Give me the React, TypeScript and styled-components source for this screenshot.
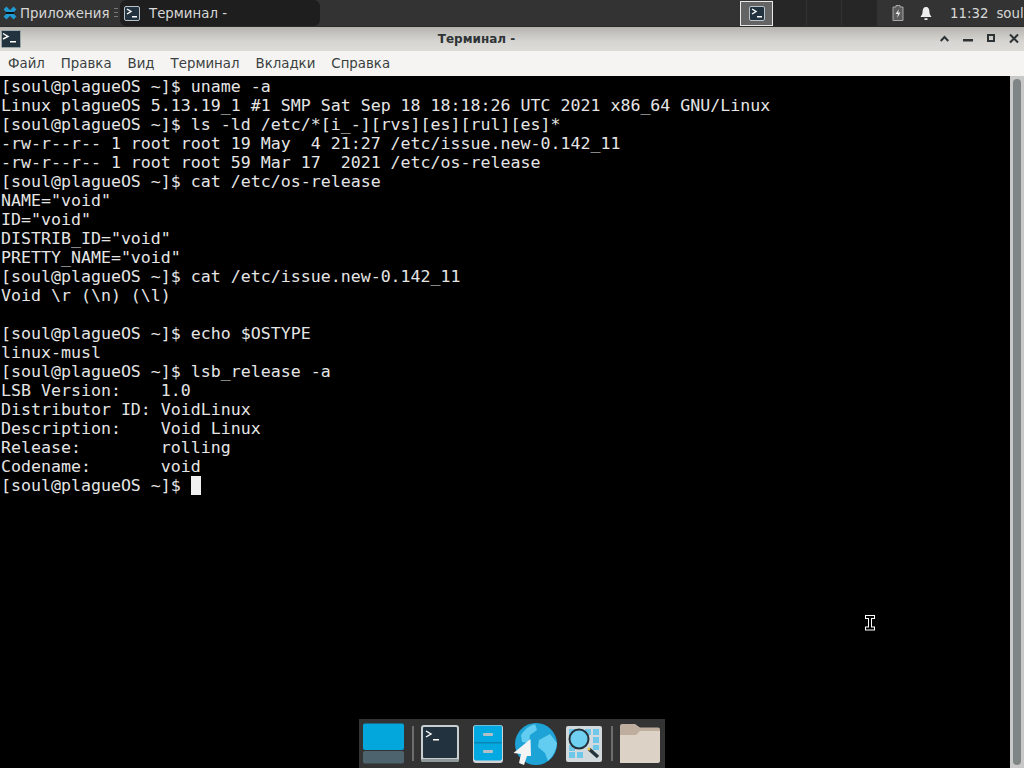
import React from "react";
import styled, { createGlobalStyle } from "styled-components";

const GlobalStyle = createGlobalStyle`
  html, body {
    margin: 0;
    padding: 0;
    width: 1024px;
    height: 768px;
    overflow: hidden;
    background: #000;
    font-family: "DejaVu Sans", sans-serif;
  }
`;

const Screen = styled.div`
  position: relative;
  width: 1024px;
  height: 768px;
  display: flex;
  flex-direction: column;
  overflow: hidden;
`;

const Panel = styled.div`
  height: 26px;
  flex: none;
  display: flex;
  align-items: stretch;
  background: #333333;
  border-bottom: 1px solid #2b2b2b;
  color: #d8d8d8;
  font-size: 13.33px;
`;

const AppMenu = styled.div`
  width: 107px;
  padding-left: 3px;
  display: flex;
  align-items: center;
  gap: 3px;
  white-space: nowrap;
`;

const Handle = styled.div`
  width: 4px;
  height: 9px;
  margin: 8px 2px 0 4px;
  border-top: 1px solid #777;
  border-bottom: 1px solid #777;
  box-sizing: border-box;

  &::after {
    content: "";
    display: block;
    height: 1px;
    margin-top: 3px;
    background: #777;
  }
`;

const TaskButton = styled.div`
  width: 200px;
  height: 26px;
  background: #1e1e1e;
  border-radius: 6px;
  display: flex;
  align-items: center;
  padding-left: 4px;
  box-sizing: border-box;
  gap: 9px;
`;

const PanelSpacer = styled.div`
  flex: 1;
`;

const PagerActive = styled.div`
  width: 33px;
  height: 25px;
  margin-top: 1px;
  box-sizing: border-box;
  border: 1px solid #e8e8e8;
  background: #646464;
  display: flex;
  align-items: center;
  justify-content: center;
`;

const PagerCell = styled.div<{ $w: number }>`
  width: ${(p) => p.$w}px;
  background: #262626;
  border-right: 1px solid #333;
  box-sizing: border-box;
`;

const Tray = styled.div`
  width: 146px;
  display: flex;
  align-items: center;
  white-space: nowrap;
  padding-left: 14px;
  box-sizing: border-box;
`;

const Clock = styled.span`
  margin-left: 18px;
`;

const UserName = styled.span`
  margin-left: 8px;
`;

const TrayIcon = styled.svg`
  flex: none;
  margin-left: 16px;
  &:first-child {
    margin-left: 0;
  }
`;

const TitleBar = styled.div`
  height: 24px;
  flex: none;
  display: flex;
  align-items: center;
  background: linear-gradient(#b5b4af, #d6d5d1 60%, #dcdbd7);
`;

const WindowIcon = styled.div`
  width: 22px;
  height: 22px;
  display: flex;
  align-items: center;
  justify-content: center;
`;

const WindowTitle = styled.div`
  flex: 1;
  text-align: center;
  font-size: 12px;
  font-weight: bold;
  color: #2e3436;
  margin-right: 9px;
`;

const WindowButtons = styled.div`
  display: flex;
  align-items: center;
  gap: 14px;
  padding-right: 5px;
`;

const MenuBar = styled.div`
  height: 25px;
  flex: none;
  display: flex;
  align-items: center;
  gap: 16px;
  padding-left: 8px;
  background: #f5f4f2;
  color: #3a3f40;
  font-size: 13.33px;
`;

const TerminalArea = styled.div`
  flex: 1;
  display: flex;
  min-height: 0;
`;

const Output = styled.pre`
  flex: 1;
  margin: 0;
  padding: 1px 0 0 1px;
  background: #000;
  color: #e5e5e5;
  font-family: "DejaVu Sans Mono", monospace;
  font-size: 16.6px;
  line-height: 19px;
  overflow: hidden;
`;

const Caret = styled.span`
  display: inline-block;
  width: 10px;
  height: 19px;
  background: #f0f0f0;
  vertical-align: top;
`;

const ScrollTrack = styled.div`
  width: 14px;
  flex: none;
  box-sizing: border-box;
  padding: 3px;
  background: #c8c8c8;
  display: flex;
`;

const ScrollThumb = styled.div`
  flex: 1;
  background: #7f8585;
  border-radius: 4px;
`;

const Dock = styled.div`
  position: absolute;
  left: 359px;
  bottom: 0;
  width: 306px;
  height: 49px;
  background: #333333;
  display: flex;
  align-items: center;
  box-sizing: border-box;
`;

const DockSeparator = styled.div<{ $ml: number }>`
  width: 2px;
  height: 35px;
  background: #6d6d6d;
  margin: 0 7px 0 ${(p) => p.$ml}px;
  flex: none;
`;

const DockIcon = styled.svg<{ $ml?: number }>`
  flex: none;
  display: block;
  overflow: visible;
  margin-left: ${(p) => p.$ml ?? 0}px;
`;

const PointerCursor = styled.svg`
  position: absolute;
  left: 864px;
  top: 614px;
`;

const TERMINAL_TEXT = `[soul@plagueOS ~]$ uname -a
Linux plagueOS 5.13.19_1 #1 SMP Sat Sep 18 18:18:26 UTC 2021 x86_64 GNU/Linux
[soul@plagueOS ~]$ ls -ld /etc/*[i_-][rvs][es][rul][es]*
-rw-r--r-- 1 root root 19 May  4 21:27 /etc/issue.new-0.142_11
-rw-r--r-- 1 root root 59 Mar 17  2021 /etc/os-release
[soul@plagueOS ~]$ cat /etc/os-release
NAME="void"
ID="void"
DISTRIB_ID="void"
PRETTY_NAME="void"
[soul@plagueOS ~]$ cat /etc/issue.new-0.142_11
Void \\r (\\n) (\\l)

[soul@plagueOS ~]$ echo $OSTYPE
linux-musl
[soul@plagueOS ~]$ lsb_release -a
LSB Version:    1.0
Distributor ID: VoidLinux
Description:    Void Linux
Release:        rolling
Codename:       void
[soul@plagueOS ~]$ `;

const MENU_ITEMS = ["Файл", "Правка", "Вид", "Терминал", "Вкладки", "Справка"];

const PromptIcon: React.FC = () => (
  <svg width="16" height="15" viewBox="0 0 16 15">
    <rect x="0.5" y="0.5" width="15" height="14" rx="1.5" fill="#22333f" stroke="#b9c2c6" />
    <path d="M3 3 L7 5.5 L3 8" fill="none" stroke="#fff" strokeWidth="1.4" />
    <rect x="8" y="10" width="5" height="1.5" fill="#fff" />
  </svg>
);

const App: React.FC = () => (
  <Screen>
    <GlobalStyle />
    <Panel>
      <AppMenu>
        <svg width="14" height="14" viewBox="0 0 14 14">
          <path d="M2 2 L12 12 M12 2 L2 12" fill="none" stroke="#1f9bd1" strokeWidth="4" />
          <rect x="3" y="6" width="8" height="2" fill="#111" />
        </svg>
        Приложения
      </AppMenu>
      <Handle />
      <TaskButton>
        <PromptIcon />
        Терминал -
      </TaskButton>
      <PanelSpacer />
      <PagerActive>
        <PromptIcon />
      </PagerActive>
      <PagerCell $w={34} />
      <PagerCell $w={35} />
      <PagerCell $w={36} />
      <Tray>
        <TrayIcon width="12" height="16" viewBox="0 0 12 16">
          <path d="M4 0.5 H8 V2 H11 V15.5 H1 V2 H4 Z" fill="#5c5c5c" stroke="#a9a9a9" />
          <path d="M7 4 L3.5 9 H6 L5 13 L8.5 7.5 H6 Z" fill="#e8e8e8" />
        </TrayIcon>
        <TrayIcon width="12" height="15" viewBox="0 0 14 16">
          <path d="M7 0.5 C10 0.5 11 3 11 6 C11 9 12.5 10.5 13.5 12 H0.5 C1.5 10.5 3 9 3 6 C3 3 4 0.5 7 0.5 Z" fill="#eeeeee" />
          <rect x="5" y="13.5" width="4" height="2" rx="1" fill="#eeeeee" />
        </TrayIcon>
        <Clock>11:32</Clock>
        <UserName>soul</UserName>
      </Tray>
    </Panel>
    <TitleBar>
      <WindowIcon>
        <svg width="20" height="18" viewBox="0 0 20 18">
          <rect x="0.5" y="0.5" width="19" height="17" rx="1" fill="#22333f" stroke="#9aa5a8" />
          <path d="M2 3.5 L7 6.5 L2 9" fill="none" stroke="#fff" strokeWidth="1.4" />
          <rect x="9" y="11" width="6" height="1.5" fill="#fff" />
        </svg>
      </WindowIcon>
      <WindowTitle>Терминал -</WindowTitle>
      <WindowButtons>
        <svg width="9" height="12" viewBox="0 0 9 12">
          <path d="M0.7 8 L4.5 4 L8.3 8" fill="none" stroke="#2e3436" strokeWidth="2" />
        </svg>
        <svg width="10" height="12" viewBox="0 0 10 12">
          <rect x="0" y="6" width="10" height="2.5" fill="#2e3436" />
        </svg>
        <svg width="8" height="12" viewBox="0 0 8 12">
          <rect x="1" y="2" width="6" height="6" fill="none" stroke="#2e3436" strokeWidth="2" />
        </svg>
        <svg width="10" height="12" viewBox="0 0 10 12">
          <path d="M1 1.5 L9 9.5 M9 1.5 L1 9.5" fill="none" stroke="#2e3436" strokeWidth="2" />
        </svg>
      </WindowButtons>
    </TitleBar>
    <MenuBar>
      {MENU_ITEMS.map((item) => (
        <span key={item}>{item}</span>
      ))}
    </MenuBar>
    <TerminalArea>
      <Output>
        {TERMINAL_TEXT}
        <Caret />
      </Output>
      <ScrollTrack>
        <ScrollThumb />
      </ScrollTrack>
    </TerminalArea>
    <PointerCursor width="12" height="18" viewBox="0 0 12 18">
      <path d="M3 3 H9 M6 3 V14.5 M3 14.5 H9" fill="none" stroke="#fff" strokeWidth="4" strokeLinecap="square" />
      <path d="M2 3 H10 M6 3 V14.5 M2 14.5 H10" fill="none" stroke="#000" strokeWidth="2" />
    </PointerCursor>
    <Dock>
      <DockIcon $ml={4} width="41" height="41" viewBox="0 0 41 41">
        <rect x="0" y="0.5" width="41" height="26.5" rx="2" fill="#04a7dc" />
        <rect x="0" y="28" width="41" height="12.5" rx="2" fill="#4d636e" />
      </DockIcon>
      <DockSeparator $ml={8} />
      <DockIcon width="38" height="37" viewBox="0 0 38 37">
        <rect x="0" y="0" width="38" height="37" rx="3" fill="#c9cfd1" />
        <rect x="0" y="34" width="38" height="3" rx="1.5" fill="#8f989b" />
        <rect x="2" y="2" width="34" height="31" rx="1" fill="#22333f" />
        <path d="M5 6 L10 9 L5 12" fill="none" stroke="#fff" strokeWidth="1.4" />
        <rect x="12" y="14" width="6" height="1.5" fill="#fff" />
      </DockIcon>
      <DockIcon $ml={14} width="30" height="38" viewBox="0 0 30 38">
        <rect x="0" y="0" width="30" height="38" rx="3" fill="#cfd5d7" />
        <rect x="1" y="0.5" width="28" height="35" rx="2" fill="#05a9e2" />
        <rect x="1" y="17" width="28" height="1.5" fill="#0b85b3" />
        <rect x="10" y="8" width="10" height="3" rx="1" fill="#b3c0c6" />
        <rect x="10" y="25" width="10" height="3" rx="1" fill="#b3c0c6" />
      </DockIcon>
      <DockIcon $ml={12} width="42" height="42" viewBox="0 0 42 42">
        <circle cx="21" cy="21" r="21" fill="#1ea3d6" />
        <path d="M6 12 Q12 3 20 1 L22 7 L15 12 L14 20 L7 19 Z" fill="#62cdf0" />
        <path d="M24 17 L35 11 L42 20 Q41 30 33 38 L30 30 L23 24 Z" fill="#62cdf0" />
        <path d="M15.5 16 L-1.5 30 L6 31 L4 40 L9 42 L12 33 L16 33 Z" fill="#f4f4f4" />
      </DockIcon>
      <DockIcon $ml={9} width="36" height="36" viewBox="0 0 36 36">
        <rect x="0" y="0" width="36" height="36" rx="2" fill="#d3dadd" />
        <path d="M3 3 H9 V9 H3 Z M11 3 H17 V9 H11 Z M19 3 H25 V9 H19 Z M27 3 H33 V9 H27 Z M27 11 H33 V17 H27 Z M3 11 H9 V17 H3 Z M3 19 H9 V25 H3 Z M27 19 H33 V24 H27 Z M3 26 H9 V32 H3 Z M11 26 H17 V32 H11 Z" fill="#6fc8ea" />
        <circle cx="13" cy="13" r="9.5" fill="#6fd0f2" stroke="#24333b" strokeWidth="2" />
        <path d="M23 23 L32 31" stroke="#24333b" strokeWidth="3.5" />
        <circle cx="23" cy="23" r="1.5" fill="#e9c33f" />
      </DockIcon>
      <DockSeparator $ml={9} />
      <DockIcon width="40" height="41" viewBox="0 0 40 41">
        <path d="M0 3 Q0 1 2 1 H15 L20 4.5 H38 Q40 4.5 40 6.5 V16 H0 Z" fill="#bfae9e" />
        <path d="M0 40 V12 H16 L20 8 H40 V38 Q40 40 38 40 Z" fill="#ddd2c6" />
      </DockIcon>
    </Dock>
  </Screen>
);

export default App;
